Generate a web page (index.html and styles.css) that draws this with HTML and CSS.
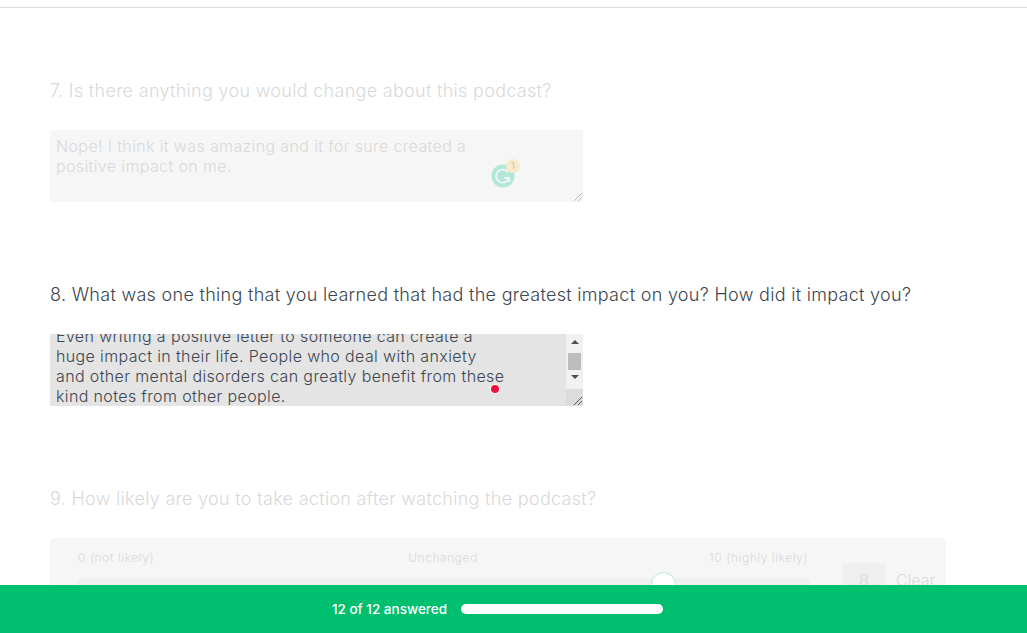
FILE: index.html
```html
<!DOCTYPE html>
<html>
  <head>
    <title>Survey</title>
    <link rel="stylesheet" href="styles.css">
  </head>
  <body>
    <div class="top-line"></div>

    <div class="question faded">
      <h2>7. Is there anything you would change about this podcast?</h2>
      <div class="answer">
        <p class="answer-text">Nope! I think it was amazing and it for sure created a<br />positive impact on me.</p>
        <div class="grammarly">
          <svg width="24" height="24" viewBox="0 0 24 24">
            <circle cx="12" cy="12" r="11.5" fill="#15c39a" />
            <path d="M17 8.2A6.6 6.6 0 1 0 18 14h-5m5 0v4" fill="none" stroke="#fff" stroke-width="1.6" />
          </svg>
          <span class="grammarly-count">1</span>
        </div>
        <svg class="grip" width="10" height="10" viewBox="0 0 10 10">
          <path d="M1 9 9 1M5 9 9 5" stroke="#bbb" stroke-width="1" />
        </svg>
      </div>
    </div>

    <div class="question">
      <h2>8. What was one thing that you learned that had the greatest impact on you? How did it impact you?</h2>
      <div class="answer focused">
        <p class="answer-text scrolled">Even writing a positive letter to someone can create a<br />huge impact in their life. People who deal with anxiety<br />and other mental disorders can greatly benefit from these<br />kind notes from other people.</p>
        <div class="scrollbar">
          <span class="arrow up"></span>
          <span class="thumb"></span>
          <span class="arrow down"></span>
          <span class="corner"></span>
        </div>
        <span class="dot"></span>
        <svg class="grip" width="10" height="10" viewBox="0 0 10 10">
          <path d="M1 9 9 1M5 9 9 5" stroke="#555" stroke-width="1" />
        </svg>
      </div>
    </div>

    <div class="question faded">
      <h2>9. How likely are you to take action after watching the podcast?</h2>
      <div class="slider-card">
        <div class="slider-main">
          <div class="slider-labels">
            <span>0 (not likely)</span>
            <span>Unchanged</span>
            <span class="label-end">10 (highly likely)</span>
          </div>
          <div class="slider-track">
            <span class="slider-knob"></span>
          </div>
        </div>
        <div class="slider-side">
          <span class="slider-value">8</span>
          <span class="slider-clear">Clear</span>
        </div>
      </div>
    </div>

    <div class="progress-bar">
      <span>12 of 12 answered</span>
      <div class="progress-fill"></div>
    </div>
  </body>
</html>
```

FILE: styles.css
```css
html,
body {
  height: 633px;
  overflow: hidden;
}
body {
  margin: 0;
  font-family: Inter, "Open Sans", sans-serif;
  font-weight: 300;
  color: #3c4650;
  background-color: #fff;
}
.top-line {
  height: 7px;
  border-bottom: 1px solid #dcdcdc;
  margin-bottom: 69px;
}
.question {
  margin-left: 50px;
  margin-bottom: 79px;
}
.question h2 {
  margin: 0 0 26px;
  padding-top: 1px;
  font-size: 18px;
  line-height: 26px;
  font-weight: 300;
  letter-spacing: 0.3px;
  white-space: nowrap;
}
.faded {
  color: #d9d9d9;
}
.answer {
  position: relative;
  width: 533px;
  height: 72px;
  background-color: #f6f6f6;
  overflow: hidden;
}
.answer-text {
  margin: 0;
  padding: 6px;
  font-size: 16px;
  line-height: 20px;
  letter-spacing: 0.37px;
  white-space: nowrap;
}
.focused {
  background-color: #e4e4e4;
}
.scrolled {
  margin-top: -14px;
}
.grip {
  position: absolute;
  right: 0;
  bottom: 0;
}
.grammarly {
  position: absolute;
  left: 441px;
  top: 34px;
  width: 24px;
  height: 24px;
  opacity: 0.3;
}
.grammarly-count {
  position: absolute;
  left: 15px;
  top: -5px;
  width: 14px;
  height: 14px;
  border-radius: 50%;
  background-color: #fbd36b;
  color: #8a6d1d;
  font-size: 9px;
  line-height: 14px;
  font-weight: 600;
  text-align: center;
}
.scrollbar {
  position: absolute;
  top: 0;
  right: 0;
  width: 17px;
  height: 100%;
  background-color: #f1f1f1;
  display: flex;
  flex-direction: column;
  align-items: center;
}
.arrow {
  flex: none;
  margin: 6px 0;
  border-left: 4px solid transparent;
  border-right: 4px solid transparent;
}
.arrow.up {
  border-bottom: 4px solid #505050;
}
.arrow.down {
  margin-top: 5px;
  border-top: 4px solid #505050;
}
.thumb {
  width: 13px;
  height: 17px;
  flex: none;
  margin-top: 3px;
  background-color: #bdbdbd;
}
.corner {
  width: 17px;
  height: 17px;
  flex: none;
  margin-top: 4px;
  background-color: #dcdcdc;
}
.dot {
  position: absolute;
  left: 441px;
  top: 51px;
  width: 8px;
  height: 8px;
  border-radius: 50%;
  background-color: #ee0f3f;
  box-shadow: 0 0 0 1px #fff;
}
.slider-card {
  display: flex;
  width: 896px;
  height: 120px;
  box-sizing: border-box;
  padding: 12px 10px 0 28px;
  border-radius: 5px;
  background-color: #f6f6f6;
}
.slider-main {
  width: 732px;
}
.slider-labels {
  display: grid;
  grid-template-columns: 1fr auto 1fr;
  font-size: 12px;
  line-height: 16px;
  letter-spacing: 0.55px;
  color: #d9d9d9;
  width: 730px;
}
.label-end {
  text-align: right;
}
.slider-track {
  position: relative;
  height: 30px;
  margin-top: 12px;
  margin-left: -1px;
  border-radius: 5px;
  background-color: #f0f0f0;
}
.slider-knob {
  position: absolute;
  left: 574px;
  top: -6px;
  width: 25px;
  height: 25px;
  box-sizing: border-box;
  border: 1px solid #b5e8da;
  border-radius: 50%;
  background-color: #fff;
}
.slider-side {
  display: flex;
  align-items: flex-start;
  gap: 10px;
  margin-left: 32px;
  margin-top: 13px;
}
.slider-value {
  width: 44px;
  height: 34px;
  border-radius: 3px;
  background-color: #efefef;
  text-align: center;
  font-size: 16px;
  line-height: 34px;
}
.slider-clear {
  font-size: 16px;
  line-height: 34px;
}
.progress-bar {
  position: fixed;
  left: 0;
  right: 0;
  bottom: 0;
  height: 48px;
  box-sizing: border-box;
  padding-right: 32px;
  background-color: #00bf6f;
  display: flex;
  align-items: center;
  justify-content: center;
  gap: 14px;
  color: #fff;
  font-size: 13.5px;
  font-weight: 500;
}
.progress-fill {
  width: 202px;
  height: 10px;
  border-radius: 5px;
  background-color: #fff;
}
```
